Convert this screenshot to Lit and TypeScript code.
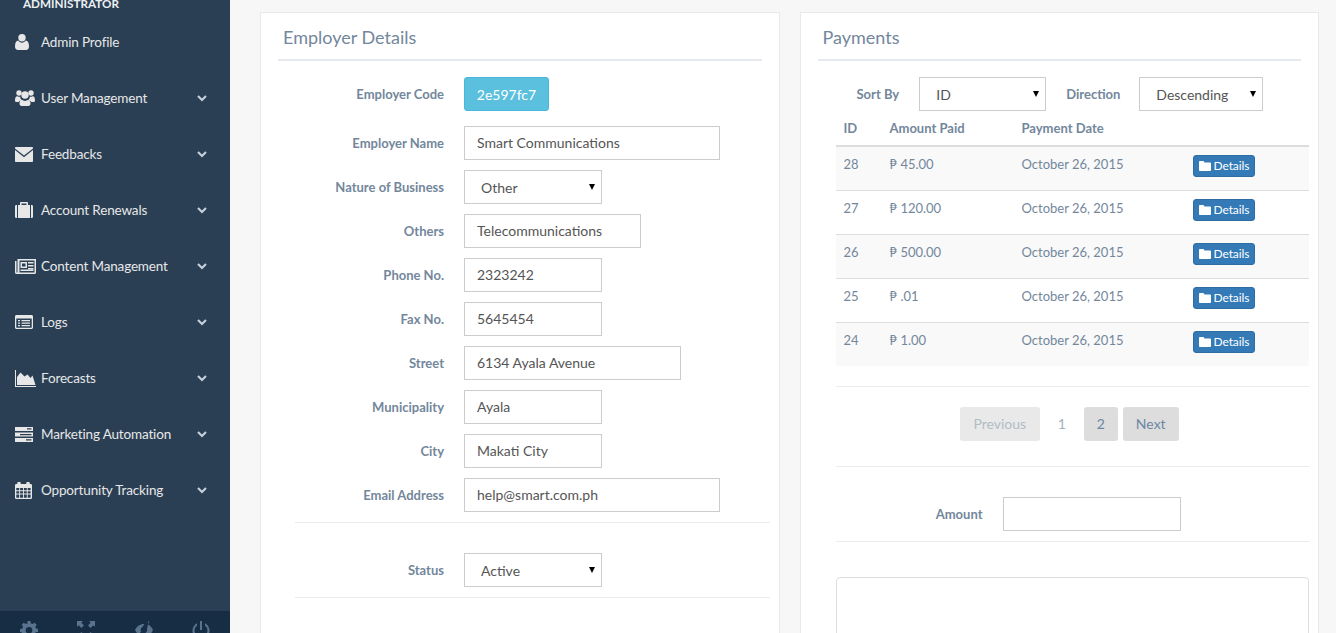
import { LitElement, html, css, svg } from 'lit'
import { customElement } from 'lit/decorators.js'

const icons: Record<string, { w: number, h: number, body: unknown }> = {
  user: { w: 14, h: 16, body: svg`<circle cx="7" cy="3.700" r="3.700"/><path d="M3.200 6.600C4.200 8 5.600 8.700 7 8.700s2.800-.7 3.800-2.100C12.900 7 14 8.800 14 12.600c0 2.200-1.200 3.400-3 3.400H3c-1.800 0-3-1.200-3-3.400C0 8.800 1.100 7 3.200 6.600z"/>` },
  users: { w: 20, h: 16, body: svg`<circle cx="4" cy="3" r="2.700"/><circle cx="16" cy="3" r="2.700"/><circle cx="10" cy="5" r="3.700"/><path d="M0 10.500C0 7.500 1 6 2.500 6.300c.8.500 1.700.7 2.800.4-.2 1.200.4 2.500 1.300 3.300-1.500.4-2.500 1.400-2.900 2H1.200C.5 12 0 11.400 0 10.500zM20 10.500c0-3-1-4.500-2.500-4.200-.8.500-1.700.7-2.800.4.200 1.200-.4 2.500-1.300 3.300 1.500.4 2.500 1.400 2.900 2h2.500c.7 0 1.200-.6 1.200-1.500zM6.800 9.800c1.800 1.500 4.600 1.500 6.400 0 1.600.5 2.300 2 2.300 3.800 0 1.500-.8 2.400-2.200 2.400H6.700c-1.400 0-2.200-.9-2.200-2.400 0-1.800.7-3.300 2.300-3.800z"/>` },
  envelope: { w: 18, h: 15, body: svg`<path d="M1 0h16c.6 0 1 .4 1 1v.4L9 8.600 0 1.400V1c0-.6.400-1 1-1zM0 3l9 7.200L18 3v11c0 .6-.4 1-1 1H1c-.6 0-1-.4-1-1z"/>` },
  suitcase: { w: 18, h: 16, body: svg`<path fill-rule="evenodd" d="M6 0h6c.6 0 1 .4 1 1v2h2v13H3V3h2V1c0-.6.400-1 1-1zm.500 1.500V3h5V1.500z"/><path d="M0 4.500C0 3.700.5 3 1.200 3H2v13h-.8C.5 16 0 15.300 0 14.500zM16 3h.8c.7 0 1.200.7 1.200 1.500v10c0 .8-.5 1.500-1.200 1.500H16z"/>` },
  newspaper: { w: 21, h: 15, body: svg`<path fill-rule="evenodd" d="M2.500 0H21v13.500c0 .8-.6 1.500-1.500 1.500H1.500C.6 15 0 14.300 0 13.500V2h1.500v11.500h1zM4.500 1.500v12h15v-12zM5.500 3H12v6H5.500zm1.500 1.500v3h3.500v-3zM13 3h5.500v1.500H13zm0 3h5.500v1.500H13zm0 3h5.500v1.200H13zM5.500 10.500H18.500v1.500H5.500z"/>` },
  list: { w: 18, h: 14, body: svg`<path fill-rule="evenodd" d="M1.500 0h15c.8 0 1.500.7 1.500 1.500v11c0 .8-.7 1.500-1.500 1.500h-15C.7 14 0 13.300 0 12.500v-11C0 .7.7 0 1.500 0zM1.300 3.500v9c0 .2.100.3.300.3h14.800c.2 0 .3-.1.300-.3v-9zM3 5h2v1.300H3zm3.500 0H15v1.300H6.500zM3 7.500h2v1.300H3zm3.500 0H15v1.300H6.500zM3 10h2v1.300H3zm3.500 0H15v1.300H6.500z"/>` },
  chart: { w: 21, h: 17, body: svg`<path d="M0 0h1v16h20v1H0z"/><path d="M2 15V7l3.500-4.500 4 4 3-2 3 3.500 2-2.500 3 9.500z"/>` },
  server: { w: 18, h: 15, body: svg`<path fill-rule="evenodd" d="M0 0h18v4H0zm12 1.300v1.300h4.500V1.300zM0 5.500h18v4H0zm5 1.400v1.300h11.500V6.900zM0 11h18v4H0zm11 1.300v1.300h5.500v-1.300z"/>` },
  calendar: { w: 17, h: 17, body: svg`<path fill-rule="evenodd" d="M3 0h2c.4 0 .7.3.7.7V2h5.600V.7c0-.4.3-.7.7-.7h2c.4 0 .7.3.7.7V2h1c.7 0 1.300.6 1.300 1.300v12.400c0 .7-.6 1.300-1.300 1.300H1.300C.6 17 0 16.400 0 15.700V3.300C0 2.600.6 2 1.300 2h1V.7c0-.4.3-.7.700-.7zM1.300 6v2.300h2.900V6zm3.800 0v2.300h2.900V6zm3.800 0v2.300h2.900V6zm3.800 0v2.300h2.900V6zM1.300 9.200v2.300h2.900V9.200zm3.800 0v2.300h2.900V9.200zm3.800 0v2.300h2.900V9.200zm3.800 0v2.300h2.900V9.200zM1.300 12.400v3.300h2.900v-3.300zm3.800 0v3.300h2.900v-3.300zm3.800 0v3.300h2.900v-3.300zm3.800 0v3.300h2.900v-3.300z"/>` },
}

const menu = [
  { label: 'Admin Profile', icon: 'user', chevron: false },
  { label: 'User Management', icon: 'users', chevron: true },
  { label: 'Feedbacks', icon: 'envelope', chevron: true },
  { label: 'Account Renewals', icon: 'suitcase', chevron: true },
  { label: 'Content Management', icon: 'newspaper', chevron: true },
  { label: 'Logs', icon: 'list', chevron: true },
  { label: 'Forecasts', icon: 'chart', chevron: true },
  { label: 'Marketing Automation', icon: 'server', chevron: true },
  { label: 'Opportunity Tracking', icon: 'calendar', chevron: true },
]

const payments = [
  { id: 28, amount: '45.00' },
  { id: 27, amount: '120.00' },
  { id: 26, amount: '500.00' },
  { id: 25, amount: '.01' },
  { id: 24, amount: '1.00' },
]

const fields = [
  { label: 'Others', value: 'Telecommunications', width: 177 },
  { label: 'Phone No.', value: '2323242', width: 138 },
  { label: 'Fax No.', value: '5645454', width: 138 },
  { label: 'Street', value: '6134 Ayala Avenue', width: 217 },
  { label: 'Municipality', value: 'Ayala', width: 138 },
  { label: 'City', value: 'Makati City', width: 138 },
  { label: 'Email Address', value: 'help@smart.com.ph', width: 256 },
]

@customElement('app-root')
export class AppRoot extends LitElement {
  static styles = css`
    :host {
      display: block;
      height: 633px;
      overflow: hidden;
      font-family: Lato, "Liberation Sans", sans-serif;
      font-size: 13px;
      color: #73879c;
      background: #f7f7f7;
    }
    .page { display: flex; height: 633px; }

    .sidebar {
      width: 230px;
      flex: none;
      height: 633px;
      display: flex;
      flex-direction: column;
      background: #2a3f54;
      overflow: hidden;
    }
    .role {
      margin: -5px 0 0 23px;
      height: 19px;
      line-height: 16px;
      font-size: 11.700px;
      font-weight: 700;
      color: #ecf0f1;
    }
    .item {
      height: 56px;
      flex: none;
      display: flex;
      align-items: center;
      padding: 0 23px 0 15px;
      color: #e7e7e7;
      font-size: 13.500px;
      letter-spacing: -0.15px;
    }
    .item .icon { width: 26px; flex: none; display: flex; }
    .item .icon svg { fill: #e7e7e7; overflow: visible; }
    .item .name { flex: 1; }
    .chev { width: 10px; height: 7px; fill: none; stroke: #c4cfda; stroke-width: 2.200; }
    .foot {
      margin-top: auto;
      height: 22px;
      box-sizing: border-box;
      flex: none;
      display: flex;
      padding-top: 10px;
      background: #172d44;
      overflow: hidden;
    }
    .foot span { flex: 1; display: flex; justify-content: center; }
    .foot svg { width: 18px; height: 18px; flex: none; fill: #5a738e; overflow: visible; }

    main {
      flex: 1;
      display: flex;
      gap: 20px;
      padding: 12px 17px 0 30px;
      align-items: flex-start;
    }
    .panel {
      flex: 1;
      height: 640px;
      box-sizing: border-box;
      background: #fff;
      border: 1px solid #e6e9ed;
      padding: 10px 17px;
    }
    .title {
      height: 38px;
      box-sizing: border-box;
      border-bottom: 2px solid #e6e9ed;
      padding: 4px 5px 0;
      font-size: 18px;
      line-height: 20px;
      font-weight: 400;
      margin-bottom: 16px;
    }
    .form { margin: 0 -8px 0 17px; }
    .row { display: flex; align-items: center; height: 34px; margin-bottom: 10px; }
    .row label { width: 149px; margin-right: 20px; text-align: right; font-weight: 700; flex: none; }
    .row.first { margin-bottom: 15px; }
    .code {
      box-sizing: border-box;
      width: 85px;
      height: 34px;
      border: 1px solid #46b8da;
      border-radius: 3px;
      background: #5bc0de;
      color: #fff;
      font-size: 14px;
      text-align: center;
      line-height: 33px;
    }
    input {
      box-sizing: border-box;
      height: 34px;
      border: 1px solid #ccc;
      padding: 0 12px 2px;
      font: 14px Lato, "Liberation Sans", sans-serif;
      color: #555;
      background: #fff;
      outline: none;
      border-radius: 0;
    }
    .sel { display: inline-block; position: relative; height: 34px; }
    .sel select {
      appearance: none;
      box-sizing: border-box;
      width: 100%;
      height: 34px;
      border: 1px solid #ccc;
      border-radius: 0;
      background: #fff;
      padding: 0 12px 0 16px;
      font: 14px Lato, "Liberation Sans", sans-serif;
      color: #555;
      outline: none;
    }
    .sel::after {
      content: '';
      position: absolute;
      right: 7px;
      top: 14px;
      border-left: 3px solid transparent;
      border-right: 3px solid transparent;
      border-top: 6px solid #000;
    }
    hr { border: 0; border-top: 1px solid #e9ebed; margin: 0; }
    .form hr.a { margin-bottom: 30px; }

    .pay { margin: 0 -8px 0 18px; }
    .sort { display: flex; align-items: center; height: 34px; }
    .sort b { font-weight: 700; }
    .sort .by { margin-left: 21px; margin-right: 20px; }
    .sort .dir { margin-left: 20px; margin-right: 19px; }
    table { width: 473px; border-collapse: collapse; table-layout: fixed; }
    th {
      text-align: left;
      font-weight: 700;
      height: 35px;
      box-sizing: border-box;
      padding: 0 8px;
      border-bottom: 2px solid #ddd;
    }
    td {
      height: 44px;
      box-sizing: border-box;
      padding: 7px 8px 0;
      vertical-align: top;
      border-top: 1px solid #ddd;
      line-height: 20px;
    }
    tbody tr:first-child td { border-top: 0; }
    tbody tr:nth-child(odd) td { background: #f9f9f9; }
    .btn {
      display: inline-flex;
      align-items: center;
      gap: 3px;
      box-sizing: border-box;
      height: 22px;
      width: 62px;
      padding: 0 5px;
      margin-top: 1px;
      background: #337ab7;
      border: 1px solid #2e6da4;
      border-radius: 3px;
      color: #fff;
      font-size: 12px;
      letter-spacing: -0.1px;
    }
    .btn svg { width: 12px; height: 10px; fill: #fff; flex: none; }
    .pager {
      display: flex;
      align-items: center;
      justify-content: center;
      gap: 5px;
      height: 34px;
      margin: 20px 0 25px;
      padding-right: 6px;
    }
    .pager span {
      box-sizing: border-box;
      height: 34px;
      line-height: 34px;
      border-radius: 3px;
      font-size: 14px;
      text-align: center;
    }
    .pager .off { background: #e9e9e9; color: #b2bcc6; width: 80px; }
    .pager .cur { color: #a3afbb; width: 34px; }
    .pager .on { background: #ddd; width: 34px; color: #6d86a3; }
    .pager .next { background: #ddd; width: 56px; color: #6d86a3; }
    .amount { display: flex; align-items: center; height: 34px; margin: 30px 0 10px; }
    .amount b { width: 147px; margin-right: 20px; text-align: right; font-weight: 700; flex: none; }
    .box {
      margin-top: 35px;
      height: 120px;
      border: 1px solid #ddd;
      border-radius: 4px;
    }
  `

  private icon (name: string) {
    const i = icons[name]
    return html`<svg width=${i.w} height=${i.h} viewBox="0 0 ${i.w} ${i.h}">${i.body}</svg>`
  }

  private select (value: string, width: number) {
    return html`<span class="sel" style="width:${width}px"><select><option>${value}</option></select></span>`
  }

  render () {
    return html`
      <div class="page">
        <aside class="sidebar">
          <div class="role">ADMINISTRATOR</div>
          ${menu.map(m => html`
            <div class="item">
              <span class="icon">${this.icon(m.icon)}</span>
              <span class="name">${m.label}</span>
              ${m.chevron ? html`<svg class="chev" viewBox="0 0 10 7"><path d="M1 1l4 4 4-4"/></svg>` : ''}
            </div>`)}
          <div class="foot">
            <span><svg viewBox="0 0 18 18"><path fill-rule="evenodd" d="M7.500 0h3l.4 2.400 1.700.7 2-1.400 2.100 2.100-1.400 2 .7 1.700L18 7.900v3l-2.400.4-.7 1.700 1.400 2-2.100 2.100-2-1.400-1.700.7-.4 2.400h-3l-.4-2.400-1.700-.7-2 1.400-2.100-2.100 1.400-2-.7-1.700L0 10.900v-3l2.400-.4.7-1.700-1.400-2 2.100-2.100 2 1.400 1.700-.7zM9 6a3.300 3.300 0 1 0 0 6.600A3.300 3.300 0 0 0 9 6z"/></svg></span>
            <span><svg viewBox="0 0 18 18"><path d="M0 0h6L4.300 1.700 7 4.400 4.400 7 1.700 4.300 0 6zM18 0v6l-1.700-1.700L13.600 7 11 4.400l2.700-2.700L12 0zM0 18v-6l1.700 1.700L4.400 11 7 13.600l-2.700 2.700L6 18zM18 18h-6l1.700-1.700L11 13.600 13.600 11l2.700 2.700L18 12z"/></svg></span>
            <span><svg viewBox="0 0 18 18"><path fill-rule="evenodd" d="M13.500 0l1 .8-1.700 2.600C15.500 4.500 17.300 7 18 9c-1.500 4-5 6.500-9 6.500-.7 0-1.300-.1-1.900-.2L9 12.500a3.500 3.500 0 0 0 3-4.300zM9.500 3l-2.100 3.100A3.500 3.500 0 0 0 6 10.500L3.900 13.500C2.200 12.500.8 10.900 0 9 1.700 5.300 5.200 3 9 3z"/></svg></span>
            <span><svg viewBox="0 0 18 18"><path d="M8 0h2v9H8z"/><path d="M5 2.200v2.400a6.400 6.400 0 1 0 8 0V2.200a8.500 8.500 0 1 1-8 0z"/></svg></span>
          </div>
        </aside>
        <main>
          <section class="panel">
            <div class="title">Employer Details</div>
            <div class="form">
              <div class="row first"><label>Employer Code</label><div class="code">2e597fc7</div></div>
              <div class="row"><label>Employer Name</label><input style="width:256px" .value=${'Smart Communications'}></div>
              <div class="row"><label>Nature of Business</label>${this.select('Other', 138)}</div>
              ${fields.map(f => html`
                <div class="row"><label>${f.label}</label><input style="width:${f.width}px" .value=${f.value}></div>`)}
              <hr class="a">
              <div class="row"><label>Status</label>${this.select('Active', 138)}</div>
              <hr>
            </div>
          </section>
          <section class="panel">
            <div class="title">Payments</div>
            <div class="pay">
              <div class="sort">
                <b class="by">Sort By</b>${this.select('ID', 127)}
                <b class="dir">Direction</b>${this.select('Descending', 124)}
              </div>
              <table>
                <colgroup><col style="width:46px"><col style="width:132px"><col style="width:171px"><col></colgroup>
                <thead><tr><th>ID</th><th>Amount Paid</th><th>Payment Date</th><th></th></tr></thead>
                <tbody>
                  ${payments.map(p => html`
                    <tr>
                      <td>${p.id}</td>
                      <td>₱ ${p.amount}</td>
                      <td>October 26, 2015</td>
                      <td><span class="btn"><svg viewBox="0 0 12 10"><path d="M1 0h3.500l1 1.500H11c.6 0 1 .4 1 1V9c0 .6-.4 1-1 1H1c-.6 0-1-.4-1-1V1c0-.6.400-1 1-1z"/></svg>Details</span></td>
                    </tr>`)}
                </tbody>
              </table>
              <hr style="margin-top:20px">
              <div class="pager">
                <span class="off">Previous</span><span class="cur">1</span><span class="on">2</span><span class="next">Next</span>
              </div>
              <hr>
              <div class="amount"><b>Amount</b><input style="width:178px"></div>
              <hr>
              <div class="box"></div>
            </div>
          </section>
        </main>
      </div>
    `
  }
}
